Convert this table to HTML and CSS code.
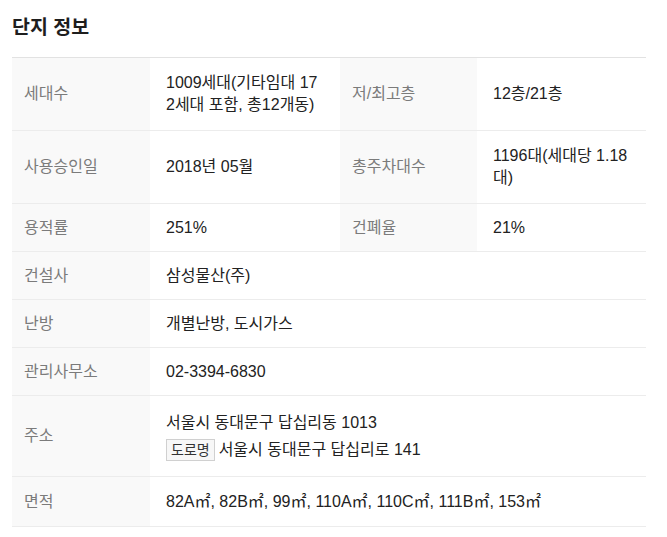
FILE: index.html
```html
<!DOCTYPE html>
<html lang="ko">
<head>
<meta charset="utf-8">
<link rel="stylesheet" href="styles.css">
</head>
<body>
<section class="complex">
  <h2 class="title">단지 정보</h2>
  <table class="info">
    <colgroup>
      <col class="c-th1">
      <col class="c-td1">
      <col class="c-th2">
      <col class="c-td2">
    </colgroup>
    <tbody>
      <tr class="tall">
        <th>세대수</th>
        <td>1009세대(기타임대 17<br>2세대 포함, 총12개동)</td>
        <th>저/최고층</th>
        <td>12층/21층</td>
      </tr>
      <tr class="tall">
        <th>사용승인일</th>
        <td>2018년 05월</td>
        <th>총주차대수</th>
        <td>1196대(세대당 1.18<br>대)</td>
      </tr>
      <tr>
        <th>용적률</th>
        <td>251%</td>
        <th>건폐율</th>
        <td>21%</td>
      </tr>
      <tr>
        <th>건설사</th>
        <td colspan="3">삼성물산(주)</td>
      </tr>
      <tr>
        <th>난방</th>
        <td colspan="3">개별난방, 도시가스</td>
      </tr>
      <tr>
        <th>관리사무소</th>
        <td colspan="3">02-3394-6830</td>
      </tr>
      <tr class="address">
        <th>주소</th>
        <td colspan="3">
          <div class="addr">서울시 동대문구 답십리동 1013</div>
          <div class="addr road"><span class="tag">도로명</span> 서울시 동대문구 답십리로 141</div>
        </td>
      </tr>
      <tr class="last">
        <th>면적</th>
        <td colspan="3">82A㎡, 82B㎡, 99㎡, 110A㎡, 110C㎡, 111B㎡, 153㎡</td>
      </tr>
    </tbody>
  </table>
</section>
</body>
</html>
```

FILE: styles.css
```css
html, body {
  margin: 0;
  padding: 0;
  background: #fff;
}

body {
  font-family: "Liberation Sans", "Noto Sans CJK KR", sans-serif;
  color: #222;
}

.complex {
  padding: 12px 12px 0 12px;
  width: 634px;
}

.title {
  margin: 0;
  font-size: 19.5px;
  font-weight: 700;
  line-height: 30px;
  color: #1e1e1e;
  padding-bottom: 15px;
}

.info {
  width: 634px;
  border-collapse: collapse;
  table-layout: fixed;
  border-top: 1px solid #e2e2e2;
  font-size: 16px;
  line-height: 22px;
}

.c-th1 { width: 138px; }
.c-td1 { width: 190px; }
.c-th2 { width: 137px; }
.c-td2 { width: 169px; }

.info th,
.info td {
  border-bottom: 1px solid #ececec;
  padding: 12.5px 16px;
  vertical-align: middle;
  text-align: left;
  white-space: nowrap;
}

.info th {
  background: #f9f9f9;
  color: #7b7b7b;
  font-weight: 400;
  padding-left: 12px;
  padding-right: 8px;
}

.info td {
  color: #222;
}

.info tr.tall th,
.info tr.tall td {
  padding-top: 14px;
  padding-bottom: 14px;
}

.info tr.address th,
.info tr.address td {
  padding-top: 15.5px;
  padding-bottom: 15px;
}

.info tr.last th,
.info tr.last td {
  padding-top: 14px;
  padding-bottom: 13px;
}

.addr.road {
  margin-top: 5px;
  display: flex;
  align-items: center;
  gap: 4px;
  height: 22px;
}

.tag {
  display: inline-block;
  box-sizing: border-box;
  height: 22px;
  line-height: 20px;
  padding: 0 4px;
  border: 1px solid #d0d0d0;
  background: #f7f7f7;
  color: #333;
  font-size: 14px;
}
```
